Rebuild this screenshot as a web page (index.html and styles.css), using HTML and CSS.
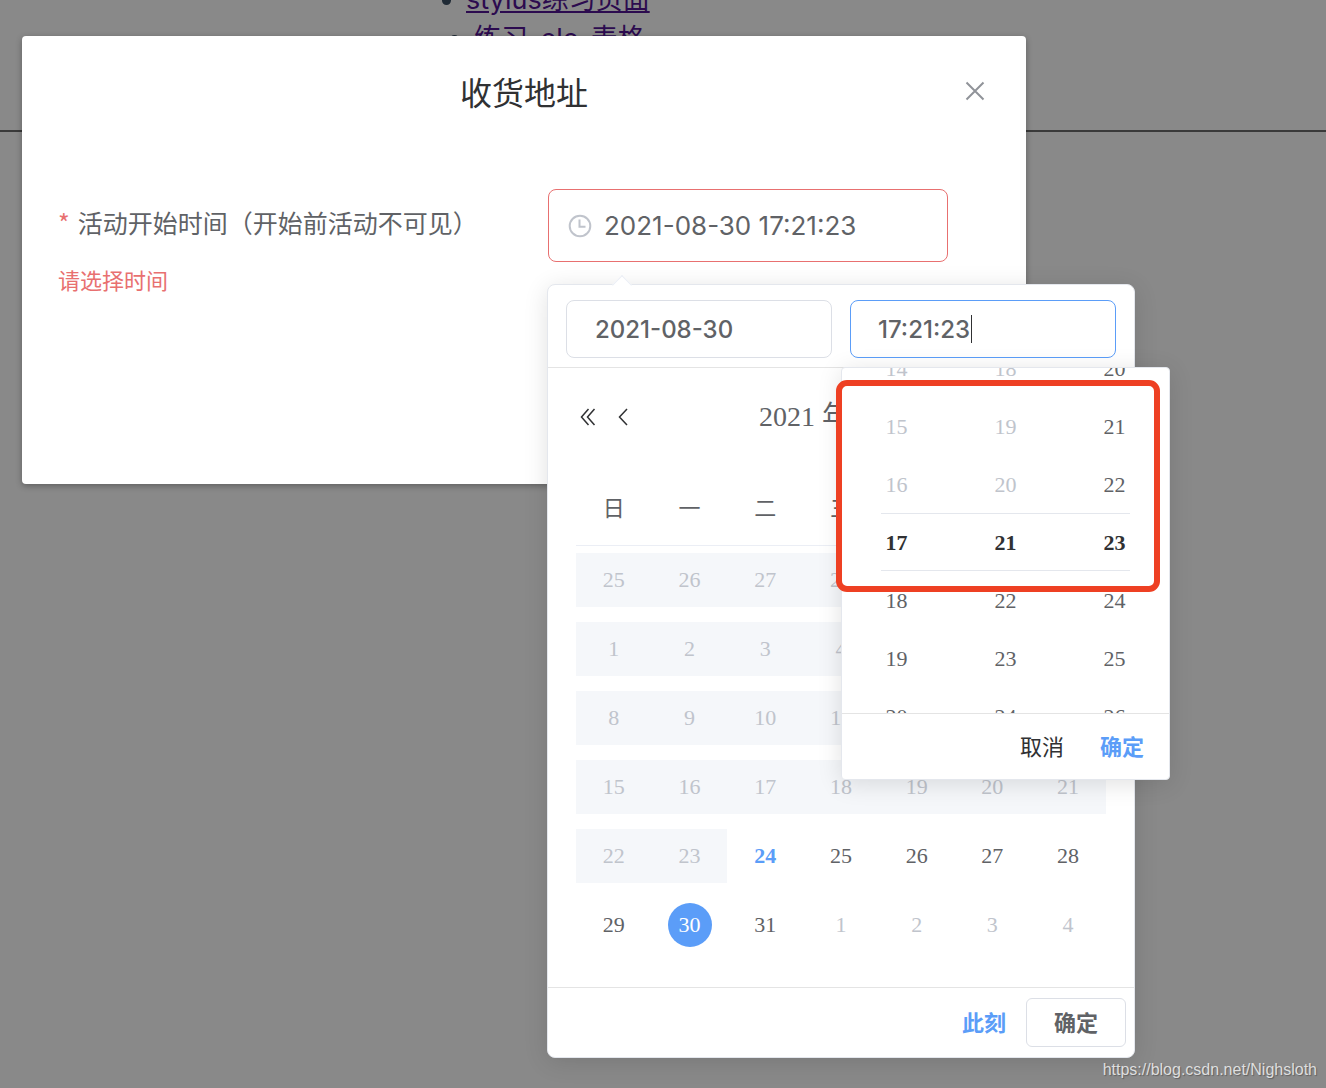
FILE: index.html
```html
<!DOCTYPE html>
<html lang="zh-CN">
<head>
<meta charset="utf-8">
<title>收货地址</title>
<link rel="stylesheet" href="styles.css">
</head>
<body>
<main class="page">
  <ul class="links">
    <li><a href="#stylus">stylus练习页面</a></li>
    <li class="links-nested"><a href="#table">练习-ele-表格</a></li>
  </ul>
  <hr class="divider">
</main>

<div class="overlay">
  <section class="dialog" role="dialog" aria-labelledby="dialog-title">
    <header class="dialog-header">
      <h2 class="dialog-title" id="dialog-title">收货地址</h2>
      <button class="dialog-close" type="button" aria-label="关闭">
        <svg width="20" height="20" viewBox="0 0 20 20"><path d="M1.500 1.500 18.500 18.500M18.500 1.500 1.500 18.500"/></svg>
      </button>
    </header>
    <form class="form-item">
      <div class="form-text">
        <label class="form-label" for="start"><span class="required">*</span>活动开始时间（开始前活动不可见）</label>
        <p class="form-error">请选择时间</p>
      </div>
      <div class="date-field">
        <div class="date-input">
          <svg class="clock" width="24" height="24" viewBox="0 0 24 24"><circle cx="12" cy="12" r="10.300"/><path d="M11.500 5.500V12.700H17.500"/></svg>
          <input id="start" type="text" value="2021-08-30 17:21:23">
        </div>

        <div class="picker">
          <span class="picker-arrow"></span>
          <div class="picker-inputs">
            <input class="picker-input" type="text" value="2021-08-30" aria-label="选择日期">
            <div class="time-field">
              <input class="picker-input active" type="text" value="17:21:23" aria-label="选择时间">
              <span class="caret"></span>
              <div class="time-panel">
                <div class="spinner">
                  <ul class="wheel">
                    <li class="off">14</li><li class="off">15</li><li class="off">16</li><li class="on">17</li><li>18</li><li>19</li><li>20</li>
                  </ul>
                  <ul class="wheel">
                    <li class="off">18</li><li class="off">19</li><li class="off">20</li><li class="on">21</li><li>22</li><li>23</li><li>24</li>
                  </ul>
                  <ul class="wheel">
                    <li>20</li><li>21</li><li>22</li><li class="on">23</li><li>24</li><li>25</li><li>26</li>
                  </ul>
                  <span class="spinner-window"></span>
                </div>
                <div class="time-footer">
                  <button class="text-button" type="button">取消</button>
                  <button class="text-button primary" type="button">确定</button>
                </div>
                <span class="highlight"></span>
              </div>
            </div>
          </div>

          <div class="month-bar">
            <div class="month-nav">
              <button type="button" aria-label="前一年"><svg width="16" height="18" viewBox="0 0 16 18"><path d="M8.500 1 1.500 9 8.500 17M14.500 1 7.500 9 14.500 17"/></svg></button>
              <button type="button" aria-label="上个月"><svg width="10" height="18" viewBox="0 0 10 18"><path d="M9 1 1.500 9 9 17"/></svg></button>
            </div>
            <div class="month-title"><span>2021 年</span><span>8 月</span></div>
            <div class="month-nav"></div>
          </div>

          <table class="calendar">
            <thead>
              <tr><th>日</th><th>一</th><th>二</th><th>三</th><th>四</th><th>五</th><th>六</th></tr>
            </thead>
            <tbody>
              <tr class="off"><td><div>25</div></td><td><div>26</div></td><td><div>27</div></td><td><div>28</div></td><td><div>29</div></td><td><div>30</div></td><td><div>31</div></td></tr>
              <tr class="off"><td><div>1</div></td><td><div>2</div></td><td><div>3</div></td><td><div>4</div></td><td><div>5</div></td><td><div>6</div></td><td><div>7</div></td></tr>
              <tr class="off"><td><div>8</div></td><td><div>9</div></td><td><div>10</div></td><td><div>11</div></td><td><div>12</div></td><td><div>13</div></td><td><div>14</div></td></tr>
              <tr class="off"><td><div>15</div></td><td><div>16</div></td><td><div>17</div></td><td><div>18</div></td><td><div>19</div></td><td><div>20</div></td><td><div>21</div></td></tr>
              <tr><td class="off"><div>22</div></td><td class="off"><div>23</div></td><td class="today"><div>24</div></td><td><div>25</div></td><td><div>26</div></td><td><div>27</div></td><td><div>28</div></td></tr>
              <tr><td><div>29</div></td><td class="selected"><div><span>30</span></div></td><td><div>31</div></td><td class="next"><div>1</div></td><td class="next"><div>2</div></td><td class="next"><div>3</div></td><td class="next"><div>4</div></td></tr>
            </tbody>
          </table>

          <div class="picker-footer">
            <button class="text-button primary" type="button">此刻</button>
            <button class="plain-button" type="button">确定</button>
          </div>
        </div>
      </div>
    </form>
  </section>
</div>
<span class="watermark">https://blog.csdn.net/Nighsloth</span>
</body>
</html>
```
FILE: styles.css
```css
* { box-sizing: border-box; }

body {
  margin: 0;
  min-height: 100vh;
  background: #898989;
  color: #606266;
  font-family: "Liberation Serif", "Noto Sans CJK SC", serif;
  overflow: hidden;
}

button, input {
  margin: 0;
  padding: 0;
  border: 0;
  background: none;
  outline: 0;
  font-family: Inter, "Noto Sans CJK SC", sans-serif;
}

svg { display: block; fill: none; }

/* Page behind the overlay */
.links {
  width: 444px;
  height: 150px;
  margin: -20px auto 0;
  padding-left: 25px;
  color: #1f2a35;
  font-family: Inter, "Noto Sans CJK SC", sans-serif;
  font-size: 27px;
  line-height: 39px;
}

.links a { color: #2c0b4f; }
.links-nested { margin-left: 8px; }
.links-nested a { text-decoration: none; }

.divider {
  margin: 0;
  border: 0;
  border-top: 2px solid #3a3a3a;
}

.overlay {
  position: absolute;
  inset: 0;
  padding: 36px 300px 0 22px;
}

.dialog {
  min-height: 448px;
  background: #fff;
  border-radius: 4px;
  box-shadow: 0 2px 6px rgba(0, 0, 0, .3);
}

.dialog-header {
  display: grid;
  grid-template-columns: 1fr auto 1fr;
  align-items: center;
  height: 110px;
  padding: 0 41px;
}

.dialog-title {
  grid-column: 2;
  margin: 0;
  color: #303133;
  font-family: "Noto Sans CJK SC", sans-serif;
  font-size: 32px;
  font-weight: 400;
}

.dialog-close { justify-self: end; }
.dialog-close svg { stroke: #909399; stroke-width: 2; }

.form-item {
  display: flex;
  justify-content: space-between;
  padding: 43px 78px 0 36px;
}

.form-text { font-family: "Noto Sans CJK SC", sans-serif; }

.form-label {
  display: block;
  font-size: 25px;
  line-height: 66px;
}

.required { margin-right: 8px; color: #e87070; }

.form-error {
  margin: 8px 0 0;
  color: #e87070;
  font-size: 22px;
  line-height: 32px;
}

.date-field { position: relative; width: 400px; }

.date-input {
  display: flex;
  align-items: center;
  gap: 12px;
  height: 73px;
  padding: 0 19px;
  border: 1px solid #e87070;
  border-radius: 8px;
}

.date-input input {
  flex: 1;
  min-width: 0;
  color: #606266;
  font-size: 26px;
}

.clock { stroke: #c0c4cc; stroke-width: 2; }

/* Date and time popup */
.picker {
  position: absolute;
  top: 95px;
  left: -1px;
  width: 588px;
  background: #fff;
  border: 1px solid #e4e7ed;
  border-radius: 8px;
  box-shadow: 0 4px 24px rgba(0, 0, 0, .12);
}

.picker-arrow {
  position: absolute;
  top: -7px;
  left: 67px;
  width: 14px;
  height: 14px;
  background: #fff;
  border: 1px solid #ebeef5;
  border-width: 1px 0 0 1px;
  transform: rotate(45deg);
}

.picker-inputs {
  display: grid;
  grid-template-columns: 1fr 1fr;
  gap: 18px;
  padding: 15px 18px 9px;
  border-bottom: 1px solid #e4e4e4;
}

.picker-input {
  width: 100%;
  height: 58px;
  padding: 0 28px;
  border: 1px solid #dcdfe6;
  border-radius: 8px;
  color: #606266;
  font-size: 24px;
  font-weight: 500;
}

.picker-input.active { padding: 0 27px; border-color: #5b9df8; }

.time-field { position: relative; }

.caret {
  position: absolute;
  top: 15px;
  left: 121px;
  width: 1px;
  height: 28px;
  background: #303133;
}

.time-panel {
  position: absolute;
  z-index: 1;
  top: 67px;
  left: -9px;
  width: 329px;
  background: #fff;
  border: 1px solid #e4e7ed;
  border-radius: 4px;
  box-shadow: 0 4px 24px rgba(0, 0, 0, .12);
}

.spinner {
  position: relative;
  display: grid;
  grid-template-columns: repeat(3, 1fr);
  height: 345px;
  overflow: hidden;
}

.wheel {
  margin: -28px 0 0;
  padding: 0;
  list-style: none;
  font-size: 22px;
  line-height: 58px;
  text-align: center;
}

.off, .next { color: #c0c4cc; }
.wheel .on { color: #303133; font-weight: 700; }

.spinner-window {
  position: absolute;
  top: 145px;
  right: 39px;
  left: 39px;
  height: 58px;
  border: 1px solid #e4e7ed;
  border-width: 1px 0;
}

.time-footer {
  display: flex;
  justify-content: flex-end;
  align-items: center;
  gap: 36px;
  height: 66px;
  padding-right: 25px;
  border-top: 1px solid #e4e4e4;
}

.text-button {
  padding-bottom: 4px;
  color: #303133;
  font-size: 22px;
}

.text-button.primary { color: #5b9df8; font-weight: 700; }

.highlight {
  position: absolute;
  top: 12px;
  left: -6px;
  width: 324px;
  height: 212px;
  border: 6px solid #ee4023;
  border-radius: 11px;
}

.month-bar {
  display: grid;
  grid-template-columns: 1fr auto 1fr;
  align-items: center;
  height: 97px;
  padding: 0 32px;
}

.month-nav { display: flex; gap: 22px; }
.month-nav svg { stroke: #303133; stroke-width: 1.5; }

.month-title {
  display: flex;
  gap: 24px;
  padding-bottom: 6px;
  font-size: 28px;
  font-weight: 400;
}

.calendar {
  width: 530px;
  margin: 0 28px 28px;
  border-collapse: collapse;
  table-layout: fixed;
  font-size: 22px;
}

.calendar th {
  height: 80px;
  padding: 2px 0 0;
  border-bottom: 1px solid #ebeef5;
  font-weight: 400;
}

.calendar td {
  height: 69px;
  padding: 0;
  text-align: center;
}

.calendar td div {
  display: flex;
  justify-content: center;
  align-items: center;
  height: 54px;
}

.off td div, td.off div { background: #f5f7fa; }
.today { color: #5b9df8; font-weight: 700; }

.selected span {
  width: 44px;
  border-radius: 50%;
  background: #5b9df8;
  color: #fff;
  line-height: 44px;
}

.picker-footer {
  display: flex;
  justify-content: flex-end;
  align-items: center;
  gap: 20px;
  height: 70px;
  padding-right: 8px;
  border-top: 1px solid #e4e4e4;
}

.plain-button {
  width: 100px;
  height: 49px;
  padding-bottom: 4px;
  border: 1px solid #dcdfe6;
  border-radius: 6px;
  color: #606266;
  font-size: 22px;
  font-weight: 700;
}

.watermark {
  position: absolute;
  right: 9px;
  bottom: 9px;
  color: #dedede;
  font-family: "Liberation Sans", sans-serif;
  font-size: 16px;
  text-shadow: 1px 1px 1px rgba(0, 0, 0, .3);
}
```
